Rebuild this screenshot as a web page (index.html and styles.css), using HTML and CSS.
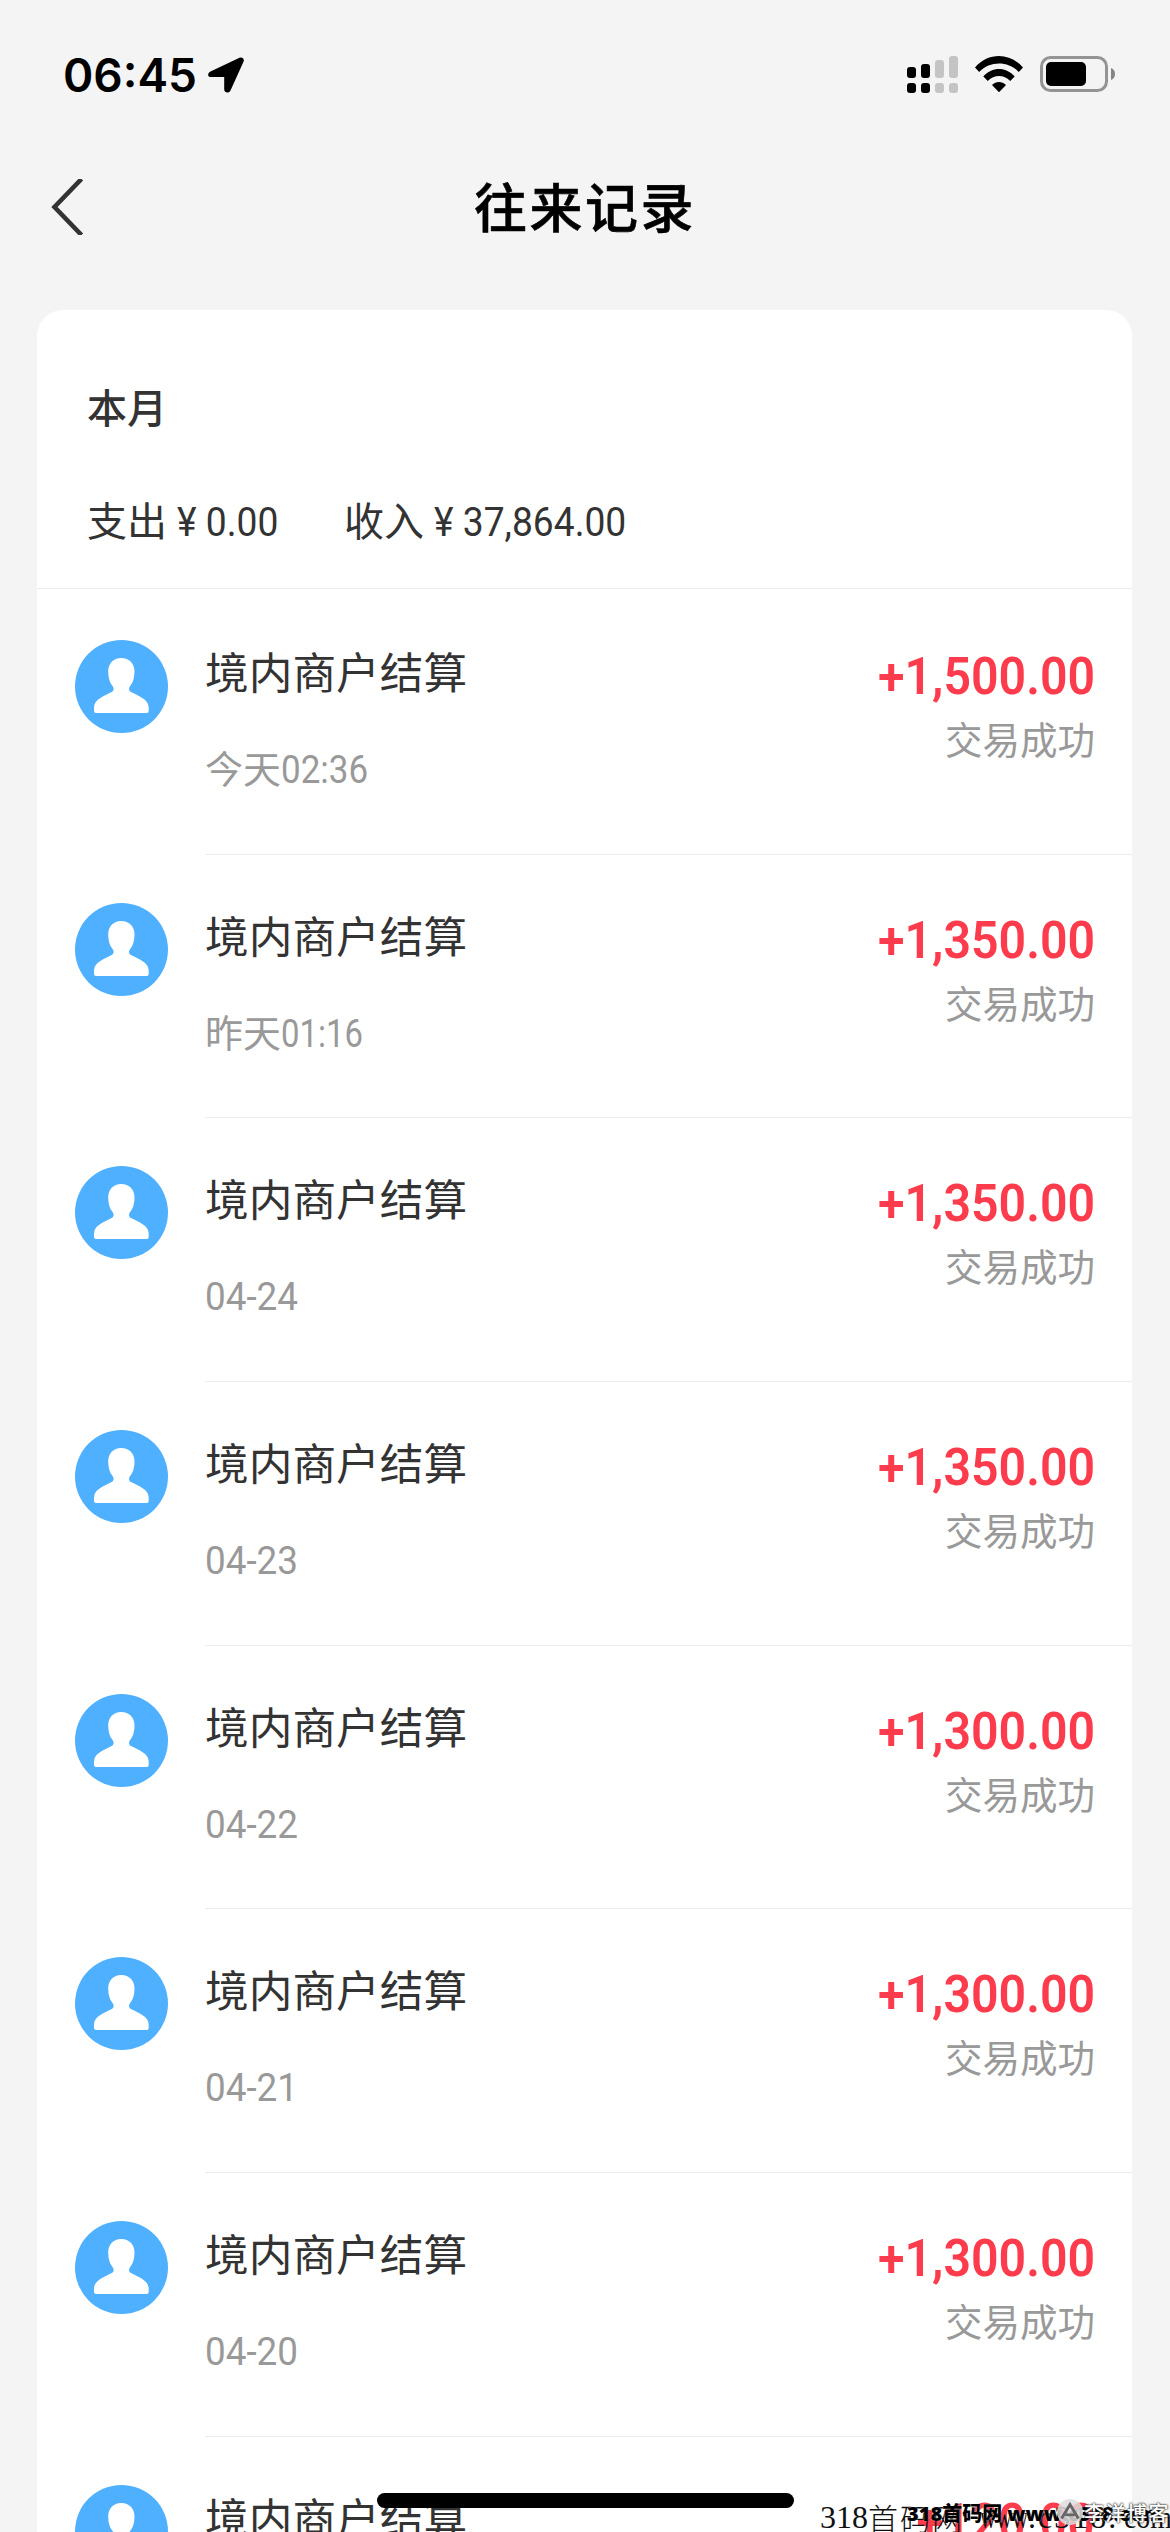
FILE: index.html
```html
<!DOCTYPE html>
<html lang="zh-CN">
<head>
<meta charset="utf-8">
<title>往来记录</title>
<link rel="stylesheet" href="styles.css">
</head>
<body>
<svg class="defs" width="0" height="0" aria-hidden="true">
  <symbol id="avatar" viewBox="0 0 93 93">
    <circle cx="46.5" cy="46.5" r="46.5" fill="#4fb0ff"/>
    <path fill="#fff" d="M46.3 18c8 0 13.200 5.500 13.200 13.500 0 6-1.500 11-4 14-2 2.500-2 5 .5 6.500 6.500 3.500 17.700 7.200 17.700 15.500v3.500q0 2-2 2H21q-2 0-2-2v-3.500c0-8.300 11.200-12 17.700-15.500 2.500-1.500 2.500-4 .5-6.500-2.500-3-4-8-4-14C33.200 23.500 38.300 18 46.300 18z"/>
  </symbol>
</svg>
<header class="status">
  <div class="clock">06:45</div>
  <svg class="location" width="36" height="36" viewBox="0 0 36 36"><path d="M3 14.200L31.500.8C34-.4 36.700 1.800 35.600 4.500L22.500 33.500C21 36.700 16.200 36 16.200 32.300V20H3C-.7 20-.9 15.900 3 14.200z"/></svg>
  <div class="indicators">
    <svg width="52" height="38" viewBox="0 0 52 38">
      <g><rect y="11" width="9" height="11" rx="3"/><rect x="14" y="8" width="9" height="14" rx="3"/><rect y="27" width="9" height="10" rx="3"/><rect x="14" y="27" width="9" height="10" rx="3"/></g>
      <g fill="#c4c4c4"><rect x="28" y="4" width="9" height="18" rx="3"/><rect x="42" width="9" height="22" rx="3"/><rect x="28" y="27" width="9" height="10" rx="3"/><rect x="42" y="27" width="9" height="10" rx="3"/></g>
    </svg>
    <svg class="wifi" width="48" height="37" viewBox="0 0 48 37"><path d="M0 11.500C13-3.800 35-3.800 48 11.500L43.800 16C33 4.700 15 4.700 4.200 16zM8.300 20.500c8.500-10 22.900-10 31.400 0L35.200 25c-6.300-6.800-16.100-6.800-22.400 0zM17 29c3.800-4 10.200-4 14 0L24 36.300z"/></svg>
    <svg class="battery" width="76" height="38" viewBox="0 0 76 38"><rect x="1.500" y="1.500" width="65" height="33" rx="9" fill="none" stroke="#949494" stroke-width="3"/><rect x="6" y="6" width="40" height="24" rx="5"/><path fill="#858585" d="M71 12q4 1.500 4 6t-4 6z"/></svg>
  </div>
</header>
<nav class="nav">
  <svg class="back" width="34" height="56" viewBox="0 0 34 56"><path d="M30.500 0L3.500 28 30.500 56" fill="none" stroke="#333" stroke-width="4.600"/></svg>
  <h1 class="title">往来记录</h1>
</nav>
<main class="card">
  <section class="summary">
    <h2 class="month">本月</h2>
    <div class="totals">
      <div class="total">支出<span class="num">¥ 0.00</span></div>
      <div class="total">收入<span class="num">¥ 37,864.00</span></div>
    </div>
  </section>
  <ul class="records">
    <li class="record"><svg class="avatar"><use href="#avatar"/></svg><div class="body"><div class="info"><div class="name">境内商户结算</div><div class="date">今天<span class="time">02:36</span></div></div><div class="result"><div class="amount">+1,500.00</div><div class="state">交易成功</div></div></div></li>
    <li class="record"><svg class="avatar"><use href="#avatar"/></svg><div class="body"><div class="info"><div class="name">境内商户结算</div><div class="date">昨天<span class="time narrow">01:16</span></div></div><div class="result"><div class="amount">+1,350.00</div><div class="state">交易成功</div></div></div></li>
    <li class="record"><svg class="avatar"><use href="#avatar"/></svg><div class="body"><div class="info"><div class="name">境内商户结算</div><div class="date"><span class="day">04-24</span></div></div><div class="result"><div class="amount">+1,350.00</div><div class="state">交易成功</div></div></div></li>
    <li class="record"><svg class="avatar"><use href="#avatar"/></svg><div class="body"><div class="info"><div class="name">境内商户结算</div><div class="date"><span class="day">04-23</span></div></div><div class="result"><div class="amount">+1,350.00</div><div class="state">交易成功</div></div></div></li>
    <li class="record"><svg class="avatar"><use href="#avatar"/></svg><div class="body"><div class="info"><div class="name">境内商户结算</div><div class="date"><span class="day">04-22</span></div></div><div class="result"><div class="amount">+1,300.00</div><div class="state">交易成功</div></div></div></li>
    <li class="record"><svg class="avatar"><use href="#avatar"/></svg><div class="body"><div class="info"><div class="name">境内商户结算</div><div class="date"><span class="day">04-21</span></div></div><div class="result"><div class="amount">+1,300.00</div><div class="state">交易成功</div></div></div></li>
    <li class="record"><svg class="avatar"><use href="#avatar"/></svg><div class="body"><div class="info"><div class="name">境内商户结算</div><div class="date"><span class="day">04-20</span></div></div><div class="result"><div class="amount">+1,300.00</div><div class="state">交易成功</div></div></div></li>
    <li class="record"><svg class="avatar"><use href="#avatar"/></svg><div class="body"><div class="info"><div class="name">境内商户结算</div></div><div class="result"><div class="amount">+120.00</div></div></div></li>
  </ul>
</main>
<div class="home-bar"></div>
<div class="mark mark-serif">318<span class="han">首码网</span><span class="www">www</span><span class="host">.c318.</span><span class="com">com</span></div>
<div class="mark mark-bold">318首码网 www.c318.com</div>
<div class="mark mark-blog"><svg width="28" height="28" viewBox="0 0 30 30"><circle cx="15" cy="15" r="14" fill="#ddd" fill-opacity=".85"/><path d="M6 22L15 7l9 15M10 18h10" fill="none" stroke="#666" stroke-width="3"/></svg>李洋博客</div>
</body>
</html>
```
FILE: styles.css
```css
* { box-sizing: border-box; margin: 0; padding: 0; }
html { overflow: hidden; }
body {
  position: relative;
  width: 1170px;
  height: 2532px;
  overflow: hidden;
  background: #f4f4f4;
  color: #333;
  font-family: Roboto, "Noto Sans CJK SC", sans-serif;
}
svg { display: block; flex: none; }
.defs { position: absolute; }

.status { display: flex; height: 140px; padding: 56px 54px 0 63px; }
.clock { width: 145px; font: 600 46px/38px Inter, sans-serif; color: #000; white-space: nowrap; }
.location { margin-top: 1px; }
.indicators { display: flex; margin-left: auto; }
.wifi { margin-left: 16px; }
.battery { margin-left: 17px; }

.nav { display: flex; align-items: center; height: 170px; padding: 0 51px 36px; }
.title { flex: 1; margin: -5px 34px 0 0; font: 500 53px/80px "Noto Sans CJK SC", sans-serif; letter-spacing: 2.500px; text-align: center; color: #000; -webkit-text-stroke: .6px #000; }

.card { margin: 0 38px 0 37px; height: 2222px; overflow: hidden; background: #fff; border-radius: 26px 26px 0 0; }
.summary { height: 279px; padding: 66px 50px 0; border-bottom: 1px solid #ececec; }
.month { font: 500 40px/60px "Noto Sans CJK SC", sans-serif; }
.totals { display: flex; margin-top: 57px; }
.total { display: flex; width: 257px; font-size: 40px; line-height: 60px; white-space: nowrap; }
.num { margin-left: 10px; transform: scaleX(.93); transform-origin: left; }

.records { list-style: none; padding-top: 2px; }
.record { display: flex; height: 263.67px; padding-left: 38px; }
.avatar { width: 93px; height: 93px; margin: 49px 37px 0 0; }
.record:nth-child(n+2) .avatar { margin-top: 48px; }
.body { flex: 1; display: flex; justify-content: space-between; border-bottom: 1.300px solid #ececec; padding-right: 37px; }
.name { margin-top: 51px; font-size: 43.700px; line-height: 64px; }
.date { margin-top: 36px; font-size: 38px; line-height: 56px; color: #999; }
.time, .day { display: inline-block; transform: scaleX(.92); transform-origin: left; }
.time.narrow { transform: scaleX(.865); }
.day { transform: scaleX(.97); }
.result { text-align: right; }
.amount { margin-top: 53px; font-size: 52.500px; line-height: 64px; font-weight: 600; color: #fc3b4d; transform: scaleX(.92); transform-origin: right; }
.state { margin-top: 5px; font-size: 37.500px; line-height: 56px; color: #999; }

.home-bar { position: absolute; left: 377px; top: 2493px; width: 417px; height: 15px; border-radius: 8px; background: #000; }
.mark { position: absolute; display: flex; white-space: nowrap; color: #111; }
.mark-serif { left: 820px; top: 2497px; font: 32px/40px "Liberation Serif", "Noto Sans CJK SC", serif; }
.han { width: 112px; font: 300 30px/40px "Noto Sans CJK SC", sans-serif; letter-spacing: 2px; }
.www { width: 48px; transform: scaleX(.69); transform-origin: left; }
.host { width: 96px; letter-spacing: 2px; }
.com { width: 48px; transform: scaleX(.87); transform-origin: left; }
.mark-bold { left: 907px; top: 2501px; font: 800 20px/26px "Open Sans", "Noto Sans CJK SC", sans-serif; color: #000; text-shadow: 0 0 1px #fff; }
.mark-blog { left: 1056px; top: 2498px; font: 500 20px/30px "Noto Sans CJK SC", sans-serif; letter-spacing: 1.500px; color: #fff; text-shadow: 0 0 2px #222, 0 0 2px #222; }
```
